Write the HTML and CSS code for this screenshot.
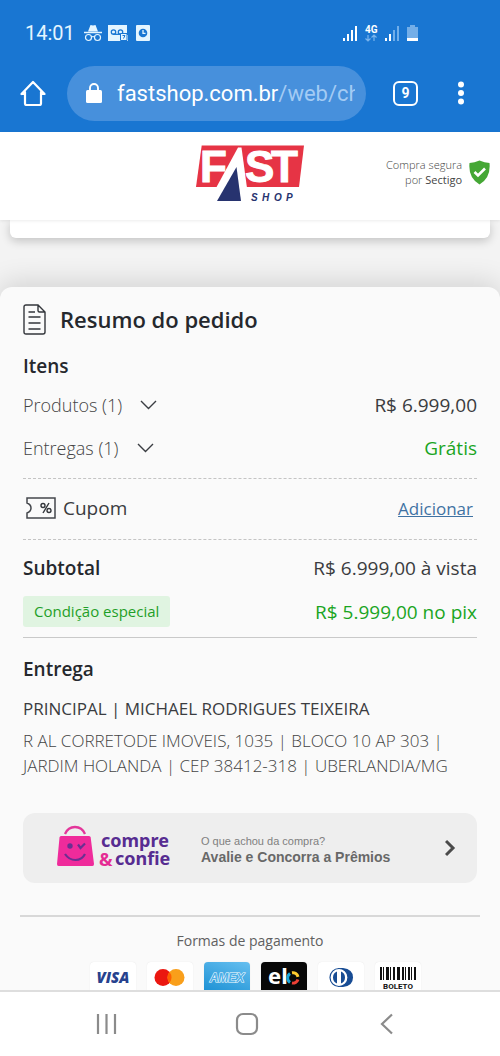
FILE: index.html
```html
<!DOCTYPE html>
<html lang="pt-BR">
<head>
<meta charset="utf-8">
<meta name="viewport" content="width=device-width, initial-scale=1">
<title>Resumo do pedido</title>
<link rel="stylesheet" href="styles.css">
</head>
<body>
<div class="chrome">
  <div class="status">
    <span class="clock">14:01</span>
    <svg class="status-left" width="68" height="18" viewBox="0 0 68 18" aria-hidden="true">
      <path d="M4 7.500l2.500-6.500 2.500.5L11.500 1 14 7.500z" fill="#e4f5ff"/>
      <path d="M0 8.500h18" stroke="#e4f5ff" stroke-width="1.500"/>
      <g fill="none" stroke="#e4f5ff" stroke-width="1.200"><circle cx="4.500" cy="13.500" r="3"/><circle cx="13.500" cy="13.500" r="3"/><path d="M7.500 13q1.500-1 3 0"/></g>
      <path d="M24 1h19v10h1v6H24z" fill="#e4f5ff"/>
      <g fill="none" stroke="#1976d2" stroke-width="1.300"><circle cx="29.500" cy="8" r="2.200"/><circle cx="36.500" cy="8" r="2.200"/><path d="M29 10.300h8"/></g>
      <path d="M36.500 9.500h6.500v7h-6.500z" fill="#e4f5ff" stroke="#1976d2"/><path d="M38.500 11.500h2.500l-1.500 3" fill="none" stroke="#1976d2"/>
      <rect x="52" y="1" width="14" height="16" rx="1" fill="#e4f5ff"/><circle cx="59" cy="9" r="4.300" fill="#1976d2"/><path d="M59 6v3.300h2.500" fill="none" stroke="#e4f5ff" stroke-width="1.300"/>
    </svg>
    <svg class="status-right" width="78" height="18" viewBox="0 0 78 18" aria-hidden="true">
      <g fill="#fff"><path d="M1 14h2v3H1zM5 10h2v7H5zM9 6h2v11H9zM13 2h2v15h-2z"/><path d="M43 14h2v3h-2zM47 10h2v7h-2z"/></g>
      <path d="M51 6h2v11h-2zM55 2h2v15h-2z" fill="#70aeea"/>
      <text x="23" y="9" class="net">4G</text>
      <path d="M26 11v6m-2.500-2.500L26 17l2.500-2.500M32 17v-6m-2.500 2.500L32 11l2.500 2.500" fill="none" stroke="#79b4ec" stroke-width="1.200"/>
      <path d="M65 3h3V1h5v2h3v14H65z" fill="#73aee8"/><path d="M65 14h11v3H65z" fill="#fff"/>
    </svg>
  </div>
  <div class="toolbar">
    <button class="icon-btn" aria-label="Página inicial">
      <svg width="26" height="26" viewBox="0 0 26 26"><path d="M1.500 14L13 2l11.500 12H21M5 14H1.500M5 12v11.500q0 1.500 1.500 1.500h13q1.500 0 1.500-1.500V12" fill="none" stroke="#fff" stroke-width="2.200" stroke-linecap="round" stroke-linejoin="round"/></svg>
    </button>
    <button class="url" aria-label="Barra de endereço">
      <svg width="16" height="20" viewBox="0 0 16 20"><rect y="7" width="16" height="13" rx="1.500" fill="#fff"/><path d="M4 8V5a4 4 0 018 0v3" fill="none" stroke="#fff" stroke-width="1.900"/></svg>
      <span class="url-text">fastshop.com.br<span class="path">/web/ch</span></span>
    </button>
    <button class="tabs" aria-label="9 guias abertas">9</button>
    <button class="icon-btn" aria-label="Mais opções">
      <svg width="6" height="24" viewBox="0 0 6 24" fill="#fff"><circle cx="3" cy="3.500" r="3"/><circle cx="3" cy="12" r="3"/><circle cx="3" cy="20.500" r="3"/></svg>
    </button>
  </div>
</div>

<header class="site-header">
  <svg class="brand" width="108" height="58" viewBox="0 0 108 58" role="img" aria-label="Fast Shop">
    <path d="M5.700.500H108L103 42H0z" fill="#e63445"/>
    <text x="4" y="37" class="brand-fast">F</text><text x="49" y="37" class="brand-fast">S</text><text x="75" y="37" class="brand-fast">T</text>
    <path d="M42 2.500h3.500L51 43H20z" fill="#fff"/>
    <path d="M40.500 22L45 56H21z" fill="#27336f"/>
    <text y="56" class="brand-shop"><tspan x="55">S</tspan><tspan x="66">H</tspan><tspan x="78">O</tspan><tspan x="90">P</tspan></text>
  </svg>
  <div class="secure">
    <p>Compra segura<br>por <b>Sectigo</b></p>
    <svg width="21" height="25" viewBox="0 0 21 25" aria-hidden="true"><path d="M10.500.500q5 2.200 10 2.500Q22 18 10.500 24.500-1 18 .500 3q5-.300 10-2.500z" fill="#45a735"/><path d="M5.500 12l3.500 3.500 7-7" fill="none" stroke="#fff" stroke-width="2.600"/></svg>
  </div>
</header>

<main class="content">
  <div class="previous"></div>
  <section class="summary">
    <h1><svg width="23" height="31" viewBox="0 0 23 31" aria-hidden="true"><path d="M3 1h12l7 7v20q0 2-2 2H3q-2 0-2-2V3q0-2 2-2zM15 1v5.500Q15 8 16.500 8H22M5.500 8H12M5.500 13h12M5.500 19h12M5.500 25h12" fill="none" stroke="#33363b" stroke-width="1.400"/></svg>Resumo do pedido</h1>
    <h2>Itens</h2>
    <div class="items">
      <div class="row item">
        <button class="expand">Produtos (1)<svg width="17" height="10" viewBox="0 0 17 10"><path d="M1 1l7.500 7.500L16 1" fill="none" stroke="#3a3d42" stroke-width="1.400"/></svg></button>
        <span>R$ 6.999,00</span>
      </div>
      <div class="row item">
        <button class="expand">Entregas (1)<svg width="17" height="10" viewBox="0 0 17 10"><path d="M1 1l7.500 7.500L16 1" fill="none" stroke="#3a3d42" stroke-width="1.400"/></svg></button>
        <span class="green">Grátis</span>
      </div>
    </div>
    <div class="row coupon">
      <span class="coupon-name"><svg width="30" height="22" viewBox="0 0 30 22" aria-hidden="true"><path d="M1 6V1h28v20H1v-5q4-1.500 4-5T1 6z" fill="none" stroke="#44474c" stroke-width="1.500"/><g fill="none" stroke="#33363b" stroke-width="1.400"><circle cx="17" cy="8.500" r="2"/><circle cx="23" cy="13.500" r="2"/><path d="M23 6l-6 10"/></g></svg>Cupom</span>
      <a href="#cupom">Adicionar</a>
    </div>
    <div class="row total"><h2>Subtotal</h2><span>R$ 6.999,00 à vista</span></div>
    <div class="row special"><span class="tag">Condição especial</span><span class="green">R$ 5.999,00 no pix</span></div>
    <div class="delivery">
      <h2>Entrega</h2>
      <p class="recipient">PRINCIPAL | MICHAEL RODRIGUES TEIXEIRA</p>
      <p class="address">R AL CORRETODE IMOVEIS, 1035 | BLOCO 10 AP 303 | JARDIM HOLANDA | CEP 38412-318 | UBERLANDIA/MG</p>
    </div>
    <a class="banner" href="#avaliar">
      <svg width="120" height="46" viewBox="0 0 120 46" role="img" aria-label="compre &amp; confie">
        <path d="M9 9Q12 2 19 2t10 7" fill="none" stroke="#e3369a" stroke-width="2.300"/>
        <path d="M5 11h28q1.500 0 1.700 1.500L38 39q0 2-1.500 2H2.500Q1 41 1 39L3.500 12.500Q3.700 11 5 11z" fill="#ef2b9b"/>
        <circle cx="14" cy="21" r="2.700" fill="#6b2f91"/><path d="M22 19.500l2.500 3.500 4.500-4.500M9 29q4 6 10.500 6T29 29" fill="none" stroke="#6b2f91" stroke-width="2.200"/>
        <text x="45" y="22" class="cc">compre</text><text x="43" y="41" class="cc amp">&amp;</text><text x="59" y="40" class="cc">confie</text>
      </svg>
      <span class="banner-text">O que achou da compra?<strong>Avalie e Concorra a Prêmios</strong></span>
      <svg width="12" height="18" viewBox="0 0 12 18" aria-hidden="true"><path d="M1 2l7 7-7 7" fill="none" stroke="#4a4a4a" stroke-width="3"/></svg>
    </a>
    <div class="payments">
      <p>Formas de pagamento</p>
      <div class="cards">
        <svg class="card" viewBox="0 0 46 32" role="img" aria-label="Visa"><text x="23" y="21" class="visa">VISA</text></svg>
        <svg class="card" viewBox="0 0 46 32" role="img" aria-label="Mastercard"><circle cx="16" cy="15.500" r="8.500" fill="#eb1710"/><circle cx="29" cy="15.500" r="8.500" fill="#f99f1b"/><path d="M22.500 10a8.500 8.500 0 010 11 8.500 8.500 0 010-11z" fill="#ff5f00"/></svg>
        <svg class="card amex" viewBox="0 0 46 32" role="img" aria-label="Amex"><text x="23" y="20" class="amex-text">AMEX</text></svg>
        <svg class="card elo" viewBox="0 0 46 32" role="img" aria-label="Elo"><text x="7" y="22" class="elo-text">el</text><g fill="none" stroke-width="3"><path d="M29 20.500a5.500 5.500 0 010-9" stroke="#1aa7dd"/><path d="M31 10.800a5.300 5.300 0 016 4" stroke="#ffcb2f"/><path d="M37 17.500a5.300 5.300 0 01-6 3.500" stroke="#ee4035"/></g></svg>
        <svg class="card" viewBox="0 0 46 32" role="img" aria-label="Diners Club"><path d="M20 6h5q10 1 10 9.500T25 25h-5z" fill="#174c94"/><circle cx="21" cy="15.500" r="9" fill="#fff" stroke="#174c94" stroke-width="1.200"/><path d="M19 9.500a6.500 6.500 0 000 12zM23 9.500a6.500 6.500 0 010 12z" fill="#174c94"/></svg>
        <svg class="card" viewBox="0 0 46 32" role="img" aria-label="Boleto"><path d="M5 5h2v13H5zM8 5h1v13H8zM11 5h3v13h-3zM15 5h1v13h-1zM18 5h2v13h-2zM22 5h3v13h-3zM27 5h2v13h-2zM30 5h1v13h-1zM33 5h2v13h-2zM36 5h1v13h-1zM39 5h2v13h-2z" fill="#111"/><text x="23" y="27" class="boleto">BOLETO</text></svg>
      </div>
    </div>
  </section>
</main>

<nav class="system-nav">
  <button aria-label="Recentes"><svg width="24" height="24" viewBox="0 0 24 24"><path d="M3 2v20M11.500 2v20M20 2v20" stroke="#8b8b8b" stroke-width="2.200"/></svg></button>
  <button aria-label="Início"><svg width="24" height="24" viewBox="0 0 24 24"><rect x="2" y="2" width="20" height="20" rx="6" fill="none" stroke="#8b8b8b" stroke-width="2.200"/></svg></button>
  <button aria-label="Voltar"><svg width="24" height="24" viewBox="0 0 24 24"><path d="M17 2.500L7 12l10 9.500" fill="none" stroke="#8b8b8b" stroke-width="2.200"/></svg></button>
</nav>
</body>
</html>
```

FILE: styles.css
```css
* { box-sizing: border-box; }
body {
  margin: 0;
  height: 100vh;
  display: flex;
  flex-direction: column;
  background: #f3f3f3;
  color: #3a3c40;
  font-family: "Open Sans", "Noto Sans", sans-serif;
}
h1, h2, p { margin: 0; }
button { border: 0; padding: 0; background: none; color: inherit; font: inherit; }
svg { display: block; flex: none; }

.chrome { flex: none; background: #1976d2; color: #fff; font-family: Roboto, sans-serif; }
.status { display: flex; align-items: center; height: 66px; padding: 0 80px 0 25px; }
.clock { font-size: 20px; color: #e4f5ff; }
.status-left { margin-left: 9px; }
.status-right { margin-left: auto; }
.net { font: 700 10px Roboto, sans-serif; fill: #fff; }
.toolbar { display: flex; align-items: center; height: 66px; padding: 0 36px 12px 20px; }
.icon-btn { display: flex; }
.url {
  flex: 1;
  min-width: 0;
  display: flex;
  align-items: center;
  gap: 15px;
  height: 55px;
  margin: 0 27px 0 21px;
  padding: 0 11px 0 19px;
  border-radius: 28px;
  background: #4790dc;
  font-size: 22px;
  text-align: left;
}
.url-text { flex: 1; overflow: hidden; white-space: nowrap; }
.path { color: #a3cbf4; }
.tabs {
  width: 25px;
  height: 25px;
  margin-right: 40px;
  border: 2px solid #fff;
  border-radius: 6px;
  font-size: 14px;
  font-weight: 700;
  line-height: 20px;
}

.site-header {
  flex: none;
  display: grid;
  grid-template-columns: 1fr auto 1fr;
  align-items: center;
  height: 88px;
  padding: 0 10px;
  background: #fff;
  z-index: 1;
  box-shadow: 0 1px 3px rgba(0, 0, 0, .08);
}
.brand { grid-column: 2; margin-bottom: 4px; }
.brand-fast { font: 700 44px "Liberation Sans", sans-serif; fill: #fff; stroke: #fff; stroke-width: 1px; }
.brand-shop { font: italic 700 10px "Liberation Sans", sans-serif; fill: #27336f; }
.secure {
  display: flex;
  justify-content: flex-end;
  align-items: center;
  gap: 7px;
  margin-bottom: 8px;
  font-size: 11px;
  font-weight: 300;
  line-height: 15px;
  text-align: right;
  color: #444;
}
.secure b { color: #444; font-weight: 400; }

.content { flex: 1; min-height: 0; overflow-y: auto; scrollbar-width: none; }
.previous {
  height: 18px;
  margin: 0 10px 49px;
  background: #fff;
  border-radius: 0 0 6px 6px;
  box-shadow: 0 3px 10px rgba(0, 0, 0, .2);
}
.summary {
  padding: 17px 23px 24px;
  background: #fafafa;
  border-radius: 12px 12px 0 0;
  box-shadow: 0 -4px 28px rgba(0, 0, 0, .14);
}
h1 {
  display: flex;
  align-items: center;
  gap: 14px;
  font-size: 22px;
  line-height: 31px;
  font-weight: 600;
  color: #25282d;
}
h2 { font-size: 19px; line-height: 26px; font-weight: 600; color: #25282d; }
h1 + h2 { margin-top: 18px; }
.row { display: flex; justify-content: space-between; align-items: center; font-size: 19px; }
.items { padding: 4px 0 9px; }
.item { height: 43px; }
.expand { display: flex; align-items: center; gap: 18px; font-size: 18px; font-weight: 300; color: #444; }
.green { color: #1aa51f; }
.coupon {
  height: 62px;
  padding: 0 4px 2px 3px;
  border: dashed #c4c4c4;
  border-width: 1px 0;
}
.coupon-name { display: flex; align-items: center; gap: 7px; }
.coupon a { font-size: 17px; color: #3f72a3; }
.total { height: 44px; margin-top: 6px; }
.special { height: 48px; padding-bottom: 4px; border-bottom: 1px solid #c9c9c9; }
.tag {
  padding: 0 11px;
  border-radius: 3px;
  background: #e0f4e1;
  color: #1f9f28;
  font-size: 15px;
  line-height: 31px;
}
.delivery { padding-top: 18px; }
.recipient { margin-top: 14px; font-size: 17px; line-height: 26px; }
.address { margin-top: 6px; font-size: 17px; line-height: 25px; font-weight: 300; color: #444; }
.banner {
  display: flex;
  align-items: center;
  height: 70px;
  margin-top: 35px;
  padding: 0 20px 0 33px;
  border-radius: 12px;
  background: #eee;
  color: #808080;
  font: 11px/16px "Liberation Sans", sans-serif;
  text-decoration: none;
}
.banner-text { flex: 1; margin: 2px 0 0 25px; }
.banner strong { display: block; font-size: 14px; line-height: 16px; color: #686868; }
.cc { font: 700 18px "Noto Sans", sans-serif; fill: #572c91; }
.amp { fill: #e52b93; }
.payments { margin: 32px -3px 0; border-top: 2px solid #d8d8d8; text-align: center; }
.payments p { margin-top: 14px; font-size: 14px; line-height: 20px; color: #606060; }
.cards { display: flex; justify-content: center; gap: 11px; margin-top: 11px; padding-left: 10px; }
.card { width: 46px; height: 32px; border-radius: 4px; background: #fff; box-shadow: 0 0 1px #ddd; }
.visa { font: italic 800 15px "Open Sans", sans-serif; fill: #27428e; text-anchor: middle; }
.amex { background: linear-gradient(20deg, #188ed2, #66bff0); }
.amex-text { font: italic 700 12px "Liberation Sans", sans-serif; fill: #4fb0e8; stroke: #fff; stroke-width: 1px; paint-order: stroke; text-anchor: middle; }
.elo { background: #080808; }
.elo-text { font: 700 22px "Noto Sans", sans-serif; fill: #fff; }
.boleto { font: 700 8px Roboto, sans-serif; fill: #111; text-anchor: middle; }

.system-nav {
  flex: none;
  display: flex;
  justify-content: space-between;
  align-items: center;
  height: 66px;
  padding: 0 101px 0 95px;
  border-top: 2px solid #dedede;
  background: #fff;
  z-index: 1;
}
```
